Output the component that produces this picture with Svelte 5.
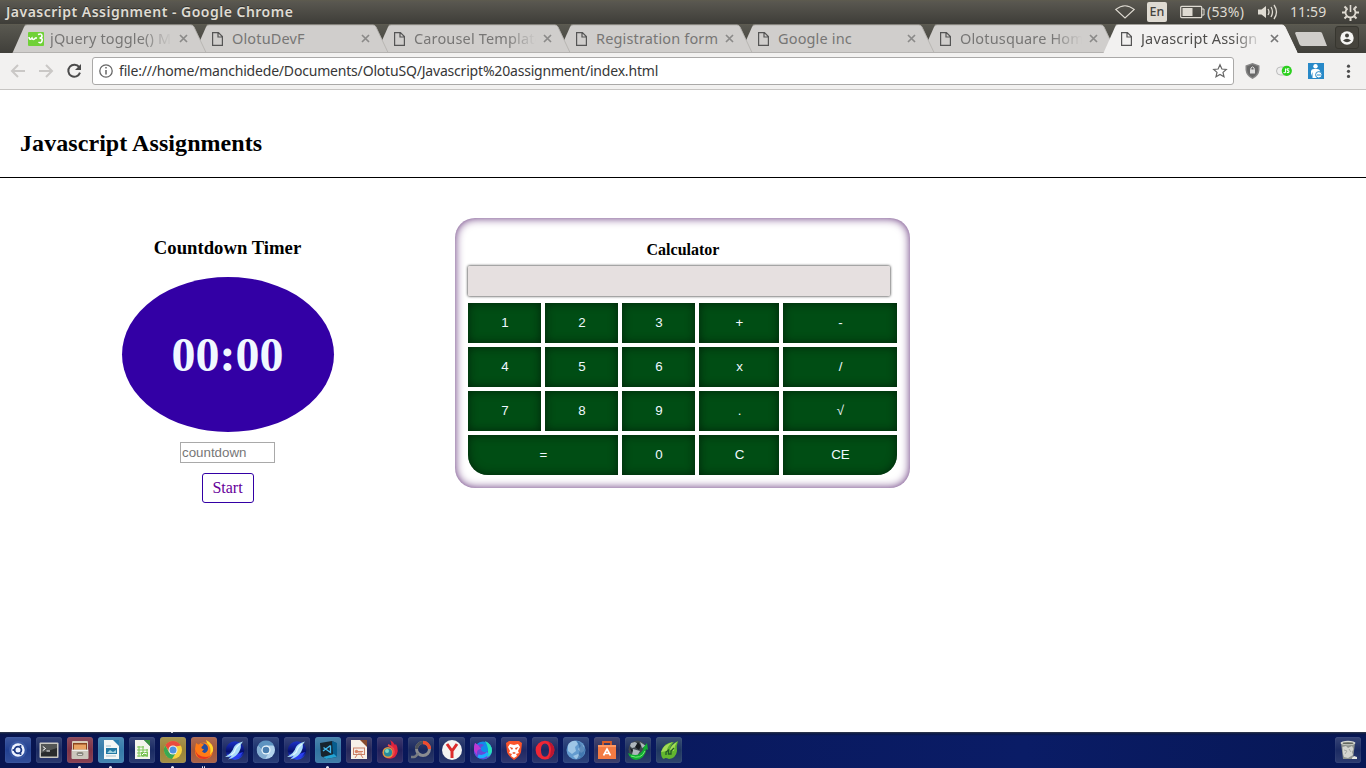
<script>
  const tabs = [
    { title: 'jQuery toggle() M', icon: 'w3', fade: true },
    { title: 'OlotuDevF' },
    { title: 'Carousel Template', fade: true },
    { title: 'Registration form' },
    { title: 'Google inc' },
    { title: 'Olotusquare Hom', fade: true },
    { title: 'Javascript Assign', fade: true, active: true }
  ];

  const keys = ['1', '2', '3', '+', '-', '4', '5', '6', 'x', '/', '7', '8', '9', '.', '√', '=', '0', 'C', 'CE'];

  const bird = `<circle cx="13" cy="13.5" r="9.3" fill="url(#navy)"/><path d="M4.5 17Q10 20 21 15L18 19.5Q12 23.5 6 19Z" fill="#2a3df0"/><path d="M21 4.5L18 5.5Q13 7 11.5 11Q10.5 15.5 3 20Q7.5 20 10 18.5Q8 21 6 22.5Q12.5 20.5 15.5 17Q19.5 12.5 18.8 7.5Z" fill="#a9dbf8"/><path d="M18 7Q13 11 12.5 15L9 18" stroke="#e4f7ff" stroke-width="1.2" fill="none"/>`;

  const launchers = [
    { name: 'Dash', tint: '#1d3c8e', art: `<circle cx="13" cy="13" r="9" fill="#5f83cc" opacity=".25"/><circle cx="13" cy="13" r="6.7" fill="#eef4ff"/><circle cx="13" cy="13" r="3.4" fill="none" stroke="#1b3883" stroke-width="1.8"/><path d="M7 13H9M15 9.5L16.2 7.5M15 16.5L16.2 18.5" stroke="#eef4ff" stroke-width="1.2"/><circle cx="8.4" cy="13" r="1.1" fill="#1b3883"/><circle cx="15.5" cy="9" r="1.1" fill="#1b3883"/><circle cx="15.5" cy="17" r="1.1" fill="#1b3883"/>` },
    { name: 'Terminal', tint: '#16265f', art: `<rect x="3.5" y="5.5" width="19" height="15.5" rx="1" fill="#c9c8c1"/><rect x="5" y="7" width="16" height="12.5" fill="#292c2d"/><path d="M5 7H21V11L5 16Z" fill="#535655"/><path d="M6.8 9.5L9.5 11.5L6.8 13.5M10.5 14H14" stroke="#fff" fill="none"/>` },
    { name: 'Files', tint: '#7c2f41', run: true, art: `<path d="M5 5Q5 4 6 4H20Q21 4 21 5V13H5Z" fill="#d9ccb9"/><path d="M6 6H20V13H6Z" fill="#8d471e"/><path d="M7 7.5H19V13H7Z" fill="#e9a362"/><path d="M4.5 12.5H21.5V21Q21.5 22 20.5 22H5.5Q4.5 22 4.5 21Z" fill="#cbc7bd"/><path d="M5 13.5H21" stroke="#eee"/><rect x="9.5" y="15" width="7" height="4" rx="2" fill="#8a887f"/><path d="M11 17.5H15" stroke="#ddd"/>` },
    { name: 'Writer', tint: '#3279a8', run: true, art: `<path d="M6 3H16L21 8V22H6Z" fill="#f4f7f6"/><path d="M15 3H21V9Z" fill="#267bae"/><path d="M8 9H13M8 19H18" stroke="#a6bfca"/><rect x="8" y="11" width="11" height="6" fill="#2278a3"/><path d="M9 16L12 13L15 15L18 13V16Z" fill="#9dd0df"/>` },
    { name: 'Calc', tint: '#162761', art: `<path d="M6 3H15L21 9V22H6Z" fill="#f4f5ec"/><path d="M15 3H21V9Z" fill="#39923d"/><path d="M8 10H15M8 13H19M8 16H19M8 19H19M10 9V20M14 9V20M18 12V20" stroke="#7fc95c" stroke-width="1.1"/><rect x="12" y="15" width="7" height="4" fill="#7bc256"/><path d="M13 18L15 16L18 17" stroke="#fff" fill="none"/>` },
    { name: 'Chrome', tint: '#998334', run: true, top: true, art: `<circle cx="13" cy="13" r="9" fill="#f7d23e"/><path d="M5.2 8.5A9 9 0 0 1 20.8 8.5L13 10L9.5 15Z" fill="#e84b3d"/><path d="M5.2 8.5A9 9 0 0 0 12 22L16.5 15H9Z" fill="#39a853"/><circle cx="13" cy="13" r="4.5" fill="#f5f5ed"/><circle cx="13" cy="13" r="3.5" fill="#4e91df"/>` },
    { name: 'Firefox', tint: '#a35436', run: true, two: true, art: `<circle cx="13" cy="13.5" r="8" fill="#ff851b"/><circle cx="12" cy="11.5" r="5" fill="#264d9f"/><path d="M5 6L8 8Q10 6 13 7.5L10.5 10Q10 12 13 12L11 14.5Q15 18 18 14Q20 10 17 6L15 3Q23 7 22 14Q21 22 13 22Q3 22 4 12Z" fill="#ff7b16"/><path d="M15 3Q23 7 22 14L19 18Q21 10 16 6Z" fill="#ffd52e"/><path d="M4 12Q6 20 15 20Q18 20 20 18Q17 22 13 22Q5 22 4 12Z" fill="#e63622"/>` },
    { name: 'SeaMonkey', tint: '#162462', art: bird },
    { name: 'Chromium', tint: '#162c6b', art: `<circle cx="13" cy="13" r="9" fill="#b3d3ed"/><path d="M5 8.5A9 9 0 0 1 21 8.5H13L9.5 14Z" fill="#5d93c0"/><path d="M5 8.5L10 15.5H16L12 22A9 9 0 0 1 5 8.5Z" fill="#85aed2"/><circle cx="13" cy="13" r="4.6" fill="#eaf6fc"/><circle cx="13" cy="13" r="3.3" fill="#4a7eb0"/>` },
    { name: 'SeaMonkey Mail', tint: '#162462', art: bird },
    { name: 'Code', tint: '#2d719f', run: true, art: `<path d="M5 6L17 4L21 6L22 20L11 22L6 19Z" fill="#17242e"/><path d="M17 4L22 6V20L18 18Z" fill="#075d8e"/><path d="M8 20L19 17L22 20L11 22Z" fill="#24a2d2"/><path d="M15.5 8.5V15.5L8.5 10.5M8 14L15.5 8.5" stroke="#42b8ed" stroke-width="1.4" fill="none"/>` },
    { name: 'Impress', tint: '#222457', art: `<path d="M5 3H15L21 9V22H5Z" fill="#f6f0e8"/><path d="M14 3H21V10Z" fill="#874b2d"/><rect x="7.5" y="11" width="11" height="6.5" fill="#f5ece6" stroke="#c98268"/><path d="M12 14.5H17M12 16H16M11 18L9 21M15 18L17 21" stroke="#d48065" fill="none"/><circle cx="10.5" cy="14.5" r="1.7" fill="#d88065"/>` },
    { name: 'Torch', tint: '#1f1c58', art: `<path d="M13 3Q17 5 18 8L19 7Q23 14 18 20Q14 23 9 21L14 18Q18 14 14 8Q15 7 13 3Z" fill="#df233c"/><circle cx="11" cy="15.5" r="5.5" fill="#df9743"/><circle cx="11" cy="15.5" r="4" fill="#258c9d"/><circle cx="10" cy="14" r="2" fill="#7dd7c1"/><path d="M11 8Q19 11 16 18" stroke="#f04646" stroke-width="2" fill="none"/>` },
    { name: 'Disk Usage', tint: '#16255a', art: `<circle cx="15" cy="12" r="6.5" fill="none" stroke="#8b8d91" stroke-width="3"/><path d="M15 5.5A6.5 6.5 0 0 1 21.5 12" fill="none" stroke="#f04b2e" stroke-width="3.3"/><path d="M3 20H6Q8 20 10 16" fill="none" stroke="#777b82" stroke-width="2.6"/><path d="M15 5.5A6.5 6.5 0 0 0 8.5 12" fill="none" stroke="#4e525a" stroke-width="3"/>` },
    { name: 'Yandex', tint: '#16265f', art: `<circle cx="13" cy="13" r="10" fill="#f4f4f3"/><path d="M8 7L13 14L18 7M13 13V21" stroke="#dc2b2b" stroke-width="3" fill="none"/>` },
    { name: 'Firefox Developer', tint: '#162768', art: `<circle cx="13" cy="13.5" r="9" fill="#118bea"/><path d="M5 6L8 8Q11 6 14 8L11 10.5L11 13Q14 17 18 14Q20 9 15 4Q22 7 22 14Q20 23 12 22Q3 20 4 12Z" fill="#654ad8"/><path d="M15 4Q22 7 22 14Q21 19 17 20Q20 12 15 4Z" fill="#25e4b8"/><path d="M5 6Q2 13 7 18Q6 12 11 12L8 8Z" fill="#bf39d4"/><path d="M8 19Q14 21 18 16" stroke="#1caeff" stroke-width="3" fill="none"/>` },
    { name: 'Brave', tint: '#1b2461', art: `<path d="M8 4H18L21 6L20 15Q19 19 13 23Q7 19 6 15L5 6Z" fill="#fb542b"/><path d="M9 7L13 8L17 7L19 10L17 14L18 16L15 17L16 19L13 21L10 19L11 17L8 16L9 14L7 10Z" fill="#fff"/><path d="M8.5 10L12 11L11 13ZM17.5 10L14 11L15 13ZM11 16L13 17L15 16L13 15Z" fill="#e64c25"/>` },
    { name: 'Opera', tint: '#18245e', art: `<path fill-rule="evenodd" d="M13 3.7A9.4 9.4 0 1 0 13 22.5A9.4 9.4 0 1 0 13 3.7ZM13 6.5Q17 6.5 17 13Q17 19.7 13 19.7Q9 19.7 9 13Q9 6.5 13 6.5Z" fill="#ee2635"/><path d="M16 4.5Q22.4 7 22.4 13Q22.4 19 16 21.8Q19 18 19 13Q19 8 16 4.5Z" fill="#bb1730"/>` },
    { name: 'Web Browser', tint: '#18316f', art: `<circle cx="13" cy="13" r="9.5" fill="#639bcf"/><path d="M5 8Q8 3 13 4L15 7L12 10L13 14L9 17L5 14ZM16 5L21 9L21 14L18 16L15 12L18 9ZM10 19L15 17L18 20L13 22Z" fill="#c7e2f5" opacity=".6"/><path d="M14 4Q20 6 22 13Q21 22 14 22Q19 14 14 4" fill="#285b98" opacity=".55"/>` },
    { name: 'Software', tint: '#282b5b', art: `<path d="M4 8H22V22H4Z" fill="#f37b43"/><path d="M9 8V5H17V8" stroke="#db5d26" stroke-width="1.8" fill="none"/><path d="M4 8H22V10H4Z" fill="#ff9a65"/><path d="M9.5 18.5L13 12L16.5 18.5M10.5 16.5H15.5" stroke="#fff" stroke-width="1.6" fill="none"/>` },
    { name: 'Net Tool', tint: '#182b5b', art: `<circle cx="12.5" cy="12.5" r="9" fill="#414950"/><path d="M6 6L10 5L13 7L11 10L7 11L5 9ZM15 5L21 9L17 11ZM8 12L15 14L12 19L7 18Z" fill="#aeb7bd"/><path d="M13 5L16 9L14 13L10 10ZM5 11L8 13L7 16Z" fill="#171c21"/><path d="M3 16Q14 22 19 11L17 12L22 6L23 13L21 12Q20 22 11 23Q5 22 3 16Z" fill="#10ad32"/><path d="M6 19Q16 23 20 14" stroke="#73f078" stroke-width="1" fill="none"/>` },
    { name: 'Midori', tint: '#1a335d', art: `<path d="M5 15Q8 5 18 5Q14 9 14 13Q15 7 22 4Q20 9 21 14Q20 21 13 22Q9 20 8 22Q5 21 5 15Z" fill="#62b72e"/><path d="M5 15Q8 7 17 5Q11 9 11 14ZM14 13Q15 8 21 5Q18 9 18 14Z" fill="#a5dc59"/><path d="M10 18V15L12.5 13V17H15V14L18 11" stroke="#245d26" stroke-width="1.3" fill="none"/>` }
  ];
</script>

<div class="screen">
  <header class="titlebar">
    <span class="window-title">Javascript Assignment - Google Chrome</span>
    <div class="status">
      <svg width="20" height="14" viewBox="0 0 20 14"><path d="M.8 4.4Q10-3 19.2 4.4L10 13Z" fill="none" stroke="#dfdbd2" stroke-width="1.1"/></svg>
      <span class="lang">En</span>
      <svg class="battery" width="25" height="14" viewBox="0 0 25 14"><rect x=".7" y="1.3" width="21" height="11.4" rx="1" fill="none" stroke="#dfdbd2" stroke-width="1.2"/><rect x="2.5" y="3" width="10" height="8" fill="#dfdbd2"/><path d="M22 4H24V10H22" fill="none" stroke="#dfdbd2"/></svg>
      <span class="percent">(53%)</span>
      <svg class="sound" width="20" height="16" viewBox="0 0 20 16"><path d="M0 5.5H3.5L8 2V14L3.5 10.5H0Z" fill="#dfdbd2"/><path d="M10 5Q12 8 10 11M13 3Q16 8 13 13M16 1Q21 8 16 15" stroke="#dfdbd2" stroke-width="1.3" fill="none"/></svg>
      <span class="clock">11:59</span>
      <svg class="gear" width="17" height="17" viewBox="0 0 17 17" fill="none" stroke="#dfdbd2"><path d="M5.6 4.4A5 5 0 1 0 11.4 4.4" stroke-width="1.8"/><path d="M8.5 1V8" stroke-width="1.6"/><path d="M8.5 14V17M0 8.5H3M14 8.5H17M2.5 2.5L4.8 4.8M12.2 12.2L14.5 14.5M2.5 14.5L4.8 12.2M12.2 4.8L14.5 2.5" stroke-width="2"/></svg>
    </div>
  </header>

  <nav class="tabstrip">
    {#each tabs as tab, i}
      <div class="tab" class:active={tab.active} style:z-index={tab.active ? 20 : 10 - i}>
        <svg class="tab-shape" width="196" height="29" viewBox="0 0 196 29">
          <path d="M.5 29L12 3Q13 1 15 1H179Q181 1 182 3L194.5 29Z" fill={tab.active ? '#f2f1f0' : '#d0cecc'} />
          <path d="M12.5 2Q13 1 15 1H179Q181 1 182 3L194 28.5" fill="none" stroke={tab.active ? '#f8f7f6' : '#b5b3b0'} stroke-width=".9" />
          {#if !tab.active}<path d="M1 28.5H195" stroke="#b4b2b0" />{/if}
        </svg>
        {#if tab.icon}
          <svg width="16" height="14" viewBox="0 0 16 14"><rect width="16" height="14" rx="1" fill="#70d138"/><path d="M1 5Q1.5 9 4 6Q5 9 7.5 6H9M10 2.5Q14 1 14 4Q14 6 11.5 6Q15 6 14 9Q13 12 10.5 10" stroke="#fff" stroke-width="1.6" fill="none"/></svg>
        {:else}
          <svg width="16" height="14" viewBox="0 0 16 14"><path d="M2.6.6H8.4L12.4 4.6V13.4H2.6ZM8 .6V5H12.4" fill="none" stroke="#555" stroke-width="1.2"/></svg>
        {/if}
        <span class="tab-title" class:fade={tab.fade}>{tab.title}</span>
        <svg class="close" width="9" height="9" viewBox="0 0 9 9"><path d="M1 1L8 8M8 1L1 8" stroke={tab.active ? '#777' : '#8b8a89'} stroke-width="1.7"/></svg>
      </div>
    {/each}
    <svg class="new-tab" width="34" height="16" viewBox="0 0 34 16"><path d="M2 1H26Q27.5 1 28 2L33 15H8Q6 15 5.3 13L1 2Z" fill="#cfcdca"/></svg>
    <div class="account"><svg width="14" height="14" viewBox="0 0 14 14"><circle cx="7" cy="7" r="6.7" fill="#f5f5f3"/><circle cx="7" cy="4.4" r="2" fill="#44433e"/><path d="M3 9.4Q7 6 11 9.4Q7 13 3 9.4Z" fill="#44433e"/></svg></div>
  </nav>

  <div class="toolbar">
    <svg class="nav-icon" width="16" height="16" viewBox="0 0 16 16"><path d="M15 8H2M8 2L2 8L8 14" stroke="#cac8c6" stroke-width="2" fill="none"/></svg>
    <svg class="nav-icon" width="16" height="16" viewBox="0 0 16 16"><path d="M1 8H14M8 2L14 8L8 14" stroke="#cac8c6" stroke-width="2" fill="none"/></svg>
    <svg class="nav-icon" width="16" height="16" viewBox="0 0 16 16"><path d="M13.2 4.2A6 6 0 1 0 14 9.7" stroke="#4b4b4b" stroke-width="2" fill="none"/><path d="M15 1V7H9Z" fill="#4b4b4b"/></svg>
    <div class="address">
      <svg width="14" height="14" viewBox="0 0 14 14"><circle cx="7" cy="7" r="6.2" fill="none" stroke="#666" stroke-width="1.3"/><path d="M7 6V10.5M7 3V4.6" stroke="#666" stroke-width="1.5"/></svg>
      <span>file:///home/manchidede/Documents/OlotuSQ/Javascript%20assignment/index.html</span>
      <svg class="star" width="16" height="16" viewBox="0 0 16 16"><path d="M8 1.8L9.9 6L14.3 6.4L11 9.4L12 13.8L8 11.5L4 13.8L5 9.4L1.7 6.4L6.1 6Z" fill="none" stroke="#666" stroke-width="1.2"/></svg>
    </div>
    <div class="extensions">
      <svg width="16" height="16" viewBox="0 0 16 16"><path d="M8.5 0L15.5 2.5V7Q15 13 8.5 16Q2 13 1.5 7V2.5Z" fill="#858585"/><path d="M8.5 1.5L14 3.4V7Q13.5 11.8 8.5 14.3Q3.5 11.8 3 7V3.4Z" fill="#686868"/><rect x="6" y="6.5" width="5" height="4" fill="#ddd"/><path d="M6.9 7V5Q8.5 2.7 10.1 5V7" fill="none" stroke="#ddd"/></svg>
      <svg width="16" height="16" viewBox="0 0 16 16"><rect x=".5" y="4" width="14" height="8" rx="4" fill="#eee" stroke="#bbb"/><circle cx="10.8" cy="7.8" r="5.1" fill="#2bd01e"/><path d="M9.5 5.5V9Q9 10.3 7.5 9.4M13.3 6Q11 5.3 11 6.8L13 8.3Q13 10.2 10.8 9.3" stroke="#fff" stroke-width="1.1" fill="none"/></svg>
      <svg width="16" height="16" viewBox="0 0 16 16"><rect width="16" height="16" fill="#2889c8"/><circle cx="7.5" cy="3.3" r="2.2" fill="#fff"/><path d="M3 13V8Q3.3 6 6 6H9Q12 6 12 8.5V15H4.5V9" fill="#fff"/><circle cx="10.8" cy="11.8" r="3.2" fill="#fff" stroke="#2889c8"/><path d="M9 12H12.8" stroke="#2889c8"/></svg>
      <svg width="16" height="16" viewBox="0 0 16 16"><g fill="#4d4d4d"><circle cx="8.5" cy="3.2" r="1.6"/><circle cx="8.5" cy="8.3" r="1.6"/><circle cx="8.5" cy="13.4" r="1.6"/></g></svg>
    </div>
  </div>

  <main>
    <h1>Javascript Assignments</h1>
    <div class="projects">
      <section class="timer">
        <h2>Countdown Timer</h2>
        <div class="dial">00:00</div>
        <input type="text" placeholder="countdown" />
        <button>Start</button>
      </section>
      <section class="calculator">
        <h3>Calculator</h3>
        <div class="display"></div>
        <div class="keypad">
          {#each keys as key}
            <button class:equals={key === '='} class:clear={key === 'CE'}>{key}</button>
          {/each}
        </div>
      </section>
    </div>
  </main>

  <footer>
    <svg width="0" height="0" class="defs"><defs><linearGradient id="navy" x1="0" y1="0" x2="0" y2="1"><stop stop-color="#1c32c9"/><stop offset=".55" stop-color="#06106f"/><stop offset="1" stop-color="#2b50ff"/></linearGradient></defs></svg>
    {#each launchers as app}
      <div class="launcher" class:run={app.run && !app.two} class:two={app.two} class:top={app.top} style:background-color={app.tint}>
        <svg width="26" height="26" viewBox="0 0 26 26" aria-label={app.name}>{@html app.art}</svg>
      </div>
    {/each}
    <div class="launcher trash">
      <svg width="26" height="26" viewBox="0 0 26 26"><path d="M6 6H20L18 22H8Z" fill="#8e938f"/><ellipse cx="13" cy="6" rx="7.5" ry="2.2" fill="#d7d9d2"/><ellipse cx="13" cy="6.3" rx="5.5" ry="1" fill="#62675f"/><path d="M7.5 10L11 9L13 11L17 9L18.5 12L17 15L18 18L13 21L9 20L8 17Z" fill="#d3d4cf"/><path d="M9 13L12 14L10 17M14 12L16 15" stroke="#a5a9a5" fill="none"/><path d="M17 21L19 19L22 20V22H17Z" fill="#e7e7e2"/></svg>
    </div>
  </footer>
</div>

<style>
  :global(body) { margin: 0; overflow: hidden; }
  * { box-sizing: border-box; }
  svg { display: block; flex: none; }
  .screen { width: 1366px; height: 768px; display: flex; flex-direction: column; background: #fff; font-family: "Liberation Serif", serif; overflow: hidden; }
  .titlebar { height: 24px; display: flex; justify-content: space-between; align-items: center; padding: 0 7px 0 6px; background: linear-gradient(#5e5b4e 0, #595750 2px, #3f3e39 23px); color: #dfdbd2; font-family: "Noto Sans", sans-serif; }
  .window-title { font-size: 14px; font-weight: 600; letter-spacing: .49px; line-height: 22px; text-shadow: 0 -1px #343330; white-space: nowrap; }
  .status { display: flex; align-items: center; font-size: 14px; }
  .status span { position: relative; top: -.5px; }
  .lang { width: 20px; height: 20px; margin-left: 12px; border-radius: 2px; background: #dfdbd2; color: #45443f; font-size: 12.5px; font-weight: 500; line-height: 20px; text-align: center; }
  .battery { margin-left: 13px; }
  .percent { width: 39px; margin-left: 2px; letter-spacing: .2px; }
  .sound { margin-left: 12px; }
  .clock { width: 37px; margin-left: 12px; letter-spacing: .1px; white-space: nowrap; }
  .gear { margin-left: 15px; }
  .tabstrip { height: 29px; display: flex; padding-left: 12px; background: linear-gradient(#605d50 0, #595850 1px, #403f3a); position: relative; flex: none; }
  .tab { width: 182px; height: 29px; flex: none; display: flex; align-items: center; padding-left: 16px; position: relative; isolation: isolate; font: 14.5px "Noto Sans", sans-serif; color: #777675; }
  .tab.active { width: 185px; margin-left: -1px; color: #504f4d; }
  .tab-shape { position: absolute; left: 0; top: 0; z-index: -1; }
  .tab-title { width: 126px; margin: 0 0 2px 6px; letter-spacing: .15px; white-space: nowrap; line-height: 26px; }
  .fade { mask-image: linear-gradient(90deg, #000 92px, transparent 122px); }
  .close { margin-left: 3px; }
  .new-tab { margin: 7px 0 0 6px; }
  .account { width: 24px; height: 23px; margin: 2px 0 0 7px; border: 1px solid #37362f; border-radius: 3px; background: #46443d; display: grid; place-items: center; }
  .toolbar { height: 37px; flex: none; display: flex; align-items: center; padding: 0 8px 1px 10px; background: #f2f1f0; border-bottom: 1px solid #c7c5c3; }
  .nav-icon { margin-right: 12px; }
  .nav-icon:nth-child(3) { margin-right: 10px; }
  .address { width: 1142px; height: 28px; display: flex; align-items: center; border: 1px solid #aaa9a8; border-radius: 3px; background: #fff; padding: 0 5px 0 6px; font: 14px "Noto Sans", sans-serif; color: #373737; }
  .address span { margin-left: 6px; letter-spacing: -.19px; white-space: nowrap; line-height: 26px; }
  .star { margin-left: auto; }
  .extensions { display: flex; gap: 16px; margin-left: 10px; }
  main { height: 642px; flex: none; }
  h1 { height: 88px; margin: 0; padding: 39px 20px 0; border-bottom: 1px solid #000; font-size: 24px; line-height: 28px; letter-spacing: .07px; }
  .projects { display: flex; padding-top: 40px; }
  .timer { width: 455px; display: flex; flex-direction: column; align-items: center; }
  h2 { margin: 19px 0 18px; font-size: 18.72px; line-height: 22px; }
  .dial { width: 212px; height: 155px; border-radius: 50%; background: #3300a5; color: #f0f8ff; display: grid; place-items: center; font-size: 48px; font-weight: 700; line-height: 54px; padding-top: 1px; }
  .timer input { width: 95px; height: 21px; margin: 10px 0; padding: 1px; border: 1px solid #a9a9a9; border-radius: 0; font: 13.333px "Liberation Sans", sans-serif; }
  .timer input::placeholder { color: #777; }
  .timer button { width: 52px; height: 30px; padding: 0; border: 1px solid #3300a5; border-radius: 3px; background: #fff; color: #660099; font: 16px "Liberation Serif", serif; }
  .calculator { width: 455px; height: 270px; padding: 22px 12px 0; border-radius: 20px; box-shadow: inset 0 0 10px #5b2873; }
  h3 { margin: 0 0 6px; padding-left: 1px; text-align: center; font-size: 16px; line-height: 20px; }
  .display { width: 422px; height: 30px; margin-left: 1px; border-radius: 1px; background: #e6e0e0; box-shadow: 0 0 3px #000; }
  .keypad { display: grid; grid-template-columns: 73px 73px 73px 80px 114px; grid-auto-rows: 40px; gap: 4px; margin: 7px 0 0 1px; }
  .keypad button { padding: 0 0 2px 1px; border: 0; background: #004d14; color: #f0f8ff; box-shadow: inset 0 0 10px #00240a; font: 13.333px "Liberation Sans", sans-serif; }
  .keypad .equals { grid-column: span 2; border-radius: 0 0 0 20px; }
  .keypad .clear { border-radius: 0 0 20px; }
  footer { height: 36px; flex: none; display: flex; gap: 5px; padding: 5px; background: linear-gradient(#333b4b 0, #071649 2px, transparent 4px), linear-gradient(90deg, #081550, #0a1c66 75%, #071755); position: relative; }
  .defs { position: absolute; }
  .launcher { width: 26px; height: 26px; flex: none; border-radius: 3px; background-image: linear-gradient(#ffffff24, #ffffff05 50%, #ffffff18); box-shadow: inset 0 0 1px #b8caff80; position: relative; }
  .run::after, .two::after { content: ''; position: absolute; width: 3px; height: 2px; top: 29px; left: 11px; background: #e4e7f2; border-radius: 2px 2px 0 0; }
  .two::after { width: 1px; box-shadow: 2px 0 #e4e7f2; }
  .top::before { content: ''; position: absolute; width: 2px; height: 1px; top: -5px; left: 11px; background: #c8ccd5; }
  .trash { margin-left: auto; background-color: #172760; }
</style>
